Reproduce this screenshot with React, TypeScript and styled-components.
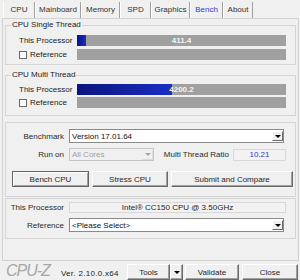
import React from "react";
import styled, { createGlobalStyle } from "styled-components";

const GlobalStyle = createGlobalStyle`
  html, body { margin: 0; padding: 0; background: #f0f0f0; }
  body { font-family: "Liberation Sans", Arial, sans-serif; font-size: 8px; color: #1e1e1e; }
  * { box-sizing: border-box; }
`;

const Window = styled.div`
  width: 300px;
  height: 280px;
  background: #f0f0f0;
  display: flex;
  flex-direction: column;
  overflow: hidden;
`;

const TabBar = styled.div`
  display: flex;
  height: 18px;
  padding: 2px 0 0 3px;
`;

const Tab = styled.div<{ $w: number; $active?: boolean }>`
  width: ${(p) => p.$w}px;
  height: 16px;
  display: flex;
  align-items: center;
  justify-content: center;
  border-left: 1px solid #ffffff;
  border-right: 1px solid #a0a0a0;
  color: ${(p) => (p.$active ? "#3838d4" : "#333333")};
  line-height: 1;
`;

const Panel = styled.div`
  margin-left: 2px;
  width: 297px;
  height: 243px;
  border: 1px solid #d2d2d2;
  padding: 0 2px;
  display: flex;
  flex-direction: column;
`;

const Group = styled.div<{ $mt: number; $pt: number; $pb: number; $gap?: number }>`
  position: relative;
  margin-top: ${(p) => p.$mt}px;
  border: 1px solid #d5d5d5;
  padding: ${(p) => p.$pt}px 0 ${(p) => p.$pb}px;
  display: flex;
  flex-direction: column;
  gap: ${(p) => p.$gap ?? 0}px;
`;

const Legend = styled.div`
  position: absolute;
  left: 5px;
  top: -6px;
  height: 10px;
  line-height: 10px;
  padding: 0 1px;
  background: #f0f0f0;
  color: #222;
`;

const BarRow = styled.div`
  display: grid;
  grid-template-columns: 58px 1fr;
  align-items: center;
  height: 11px;
  padding: 0 9px 0 13px;
`;

const RowLabel = styled.div`
  color: #222;
  white-space: nowrap;
`;

const CheckLabel = styled.div`
  display: flex;
  align-items: center;
  gap: 3px;
  color: #222;
`;

const CheckBox = styled.div`
  width: 8px;
  height: 8px;
  background: #fff;
  border: 1px solid #6a6a6a;
`;

const Bar = styled.div`
  position: relative;
  height: 11px;
  background: #a0a0a0;
  display: flex;
  align-items: center;
  justify-content: center;
`;

const BarFill = styled.div`
  position: absolute;
  left: 0;
  top: 0;
  bottom: 0;
  background: linear-gradient(to right, #0a157c, #1a2ec4);
`;

const BarValue = styled.span`
  position: relative;
  color: #f4f4f4;
  font-weight: bold;
  line-height: 1;
`;

const FormRow = styled.div<{ $h: number; $mt?: number; $pr?: number }>`
  display: flex;
  align-items: center;
  height: ${(p) => p.$h}px;
  margin-top: ${(p) => p.$mt ?? 0}px;
  padding-right: ${(p) => p.$pr ?? 0}px;
`;

const FormLabel = styled.div`
  width: 58px;
  margin-right: 5px;
  text-align: right;
  color: #2a2a2a;
  white-space: nowrap;
`;

const Select = styled.div<{ $w: number; $disabled?: boolean }>`
  width: ${(p) => p.$w}px;
  height: 100%;
  display: flex;
  align-items: center;
  padding-left: 2px;
  background: ${(p) => (p.$disabled ? "#f0f0f0" : "#ffffff")};
  border: 1px solid ${(p) => (p.$disabled ? "#c6c6c6" : "#8a8a8a")};
  color: ${(p) => (p.$disabled ? "#a0a0a0" : "#111")};
  white-space: nowrap;
`;

const DropBtn = styled.div<{ $disabled?: boolean }>`
  margin-left: auto;
  width: 11px;
  height: 10px;
  display: flex;
  align-items: center;
  justify-content: center;
  background: #f0f0f0;
  border: 1px solid;
  border-color: ${(p) =>
    p.$disabled ? "#f0f0f0 #dadada #dadada #f0f0f0" : "#ffffff #6a6a6a #6a6a6a #ffffff"};
`;

const Arrow = styled.div<{ $disabled?: boolean }>`
  width: 0;
  height: 0;
  border-left: 3px solid transparent;
  border-right: 3px solid transparent;
  border-top: 3px solid ${(p) => (p.$disabled ? "#a8a8a8" : "#000")};
`;

const RatioLabel = styled.div`
  flex: 1;
  text-align: right;
  padding-right: 4px;
  color: #2a2a2a;
  white-space: nowrap;
`;

const ReadBox = styled.div<{ $w: number; $h: number; $blue?: boolean }>`
  width: ${(p) => p.$w}px;
  height: ${(p) => p.$h}px;
  display: flex;
  align-items: center;
  justify-content: center;
  background: #f2f2f2;
  border: 1px solid #d8d8d8;
  color: ${(p) => (p.$blue ? "#3535d0" : "#1e1e1e")};
  white-space: nowrap;
  line-height: 1;
`;

const ButtonRow = styled.div`
  display: grid;
  grid-template-columns: 77px 76px 1fr;
  gap: 3px;
  height: 16px;
  margin-top: 10px;
  padding: 0 2px 0 6px;
`;

const Button = styled.div<{ $w?: number; $default?: boolean }>`
  ${(p) => (p.$w ? `width: ${p.$w}px;` : "")}
  height: 16px;
  display: flex;
  align-items: center;
  justify-content: center;
  background: #f0f0f0;
  border: 1px solid;
  border-color: ${(p) => (p.$default ? "#646464" : "#ffffff #6a6a6a #6a6a6a #ffffff")};
  box-shadow: ${(p) =>
    p.$default ? "inset 1px 1px #ffffff, inset -1px -1px #a0a0a0" : "inset -1px -1px #a0a0a0"};
  color: #1e1e1e;
  white-space: nowrap;
`;

const Footer = styled.div`
  display: flex;
  align-items: flex-start;
  height: 19px;
  padding: 0 2px 0 6px;
`;

const Logo = styled.div`
  font-size: 16px;
  font-style: italic;
  letter-spacing: -1px;
  color: #a6a6a6;
  line-height: 19px;
  height: 19px;
`;

const Version = styled.div`
  margin-left: 11px;
  margin-top: 9px;
  letter-spacing: 0.3px;
  color: #222;
  line-height: 1;
`;

const FooterButtons = styled.div`
  margin-left: auto;
  margin-top: 3px;
  display: flex;
`;

const tabs = ["CPU", "Mainboard", "Memory", "SPD", "Graphics", "Bench", "About"];
const tabWidths = [32, 46, 39, 31, 39, 33, 30];
const MAX = 9200;

function ScoreBar({ value }: { value: number }) {
  return (
    <Bar>
      <BarFill style={{ width: `${(value / MAX) * 100}%` }} />
      <BarValue>{value.toFixed(1)}</BarValue>
    </Bar>
  );
}

function RefBar() {
  return <Bar />;
}

export default function App() {
  return (
    <Window>
      <GlobalStyle />
      <TabBar>
        {tabs.map((t, i) => (
          <Tab key={t} $w={tabWidths[i]} $active={t === "Bench"}>
            {t}
          </Tab>
        ))}
      </TabBar>
      <Panel>
        <Group $mt={6} $pt={9} $pb={4} $gap={3}>
          <Legend>CPU Single Thread</Legend>
          <BarRow>
            <RowLabel>This Processor</RowLabel>
            <ScoreBar value={411.4} />
          </BarRow>
          <BarRow>
            <CheckLabel>
              <CheckBox />
              Reference
            </CheckLabel>
            <RefBar />
          </BarRow>
        </Group>
        <Group $mt={10} $pt={8} $pb={7} $gap={2}>
          <Legend>CPU Multi Thread</Legend>
          <BarRow>
            <RowLabel>This Processor</RowLabel>
            <ScoreBar value={4200.2} />
          </BarRow>
          <BarRow>
            <CheckLabel>
              <CheckBox />
              Reference
            </CheckLabel>
            <RefBar />
          </BarRow>
        </Group>
        <Group $mt={6} $pt={6} $pb={9}>
          <FormRow $h={14}>
            <FormLabel>Benchmark</FormLabel>
            <Select $w={215}>
              Version 17.01.64
              <DropBtn>
                <Arrow />
              </DropBtn>
            </Select>
          </FormRow>
          <FormRow $h={13} $mt={5} $pr={9}>
            <FormLabel>Run on</FormLabel>
            <Select $w={85} $disabled>
              All Cores
              <DropBtn $disabled>
                <Arrow $disabled />
              </DropBtn>
            </Select>
            <RatioLabel>Multi Thread Ratio</RatioLabel>
            <ReadBox $w={53} $h={12} $blue>
              10.21
            </ReadBox>
          </FormRow>
          <ButtonRow>
            <Button $default>Bench CPU</Button>
            <Button>Stress CPU</Button>
            <Button>Submit and Compare</Button>
          </ButtonRow>
        </Group>
        <Group $mt={1} $pt={3} $pb={6}>
          <FormRow $h={11}>
            <FormLabel>This Processor</FormLabel>
            <ReadBox $w={217} $h={11}>
              Intel® CC150 CPU @ 3.50GHz
            </ReadBox>
          </FormRow>
          <FormRow $h={14} $mt={5}>
            <FormLabel>Reference</FormLabel>
            <Select $w={215}>
              &lt;Please Select&gt;
              <DropBtn>
                <Arrow />
              </DropBtn>
            </Select>
          </FormRow>
        </Group>
      </Panel>
      <Footer>
        <Logo>CPU-Z</Logo>
        <Version>Ver. 2.10.0.x64</Version>
        <FooterButtons>
          <Button $w={43}>Tools</Button>
          <Button $w={13}>
            <Arrow />
          </Button>
          <Button $w={54} style={{ marginLeft: 2 }}>Validate</Button>
          <Button $w={56} style={{ marginLeft: 3 }}>Close</Button>
        </FooterButtons>
      </Footer>
    </Window>
  );
}
